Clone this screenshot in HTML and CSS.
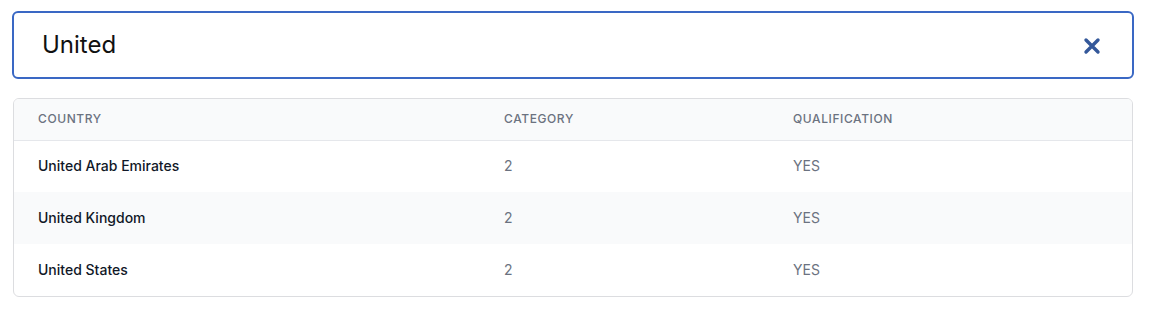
FILE: index.html
```html
<!DOCTYPE html>
<html>
<head>
<meta charset="utf-8">
<link rel="stylesheet" href="styles.css">
</head>
<body>
<div class="page">
  <div class="search">
    <span class="search-text">United</span>
    <svg class="clear" width="18" height="18" viewBox="0 0 18 18"><path d="M3 3L15 15M15 3L3 15" stroke="#34589a" stroke-width="3.4" stroke-linecap="round"/></svg>
  </div>
  <div class="table-wrap">
    <table class="table">
      <thead>
        <tr><th class="c1">Country</th><th class="c2">Category</th><th>Qualification</th></tr>
      </thead>
      <tbody>
        <tr><td class="name">United Arab Emirates</td><td>2</td><td>YES</td></tr>
        <tr class="alt"><td class="name">United Kingdom</td><td>2</td><td>YES</td></tr>
        <tr><td class="name">United States</td><td>2</td><td>YES</td></tr>
      </tbody>
    </table>
  </div>
</div>
</body>
</html>
```
FILE: styles.css
```css
* { box-sizing: border-box; }
html, body { margin: 0; padding: 0; background: #fff; }
body { font-family: Inter, "Noto Sans", sans-serif; }
.page { padding: 11px 28px 0 12px; display: flex; flex-direction: column; gap: 19px; }
.search {
  height: 68px;
  border: 2px solid #3a68c4;
  border-radius: 6px;
  display: flex;
  align-items: center;
  justify-content: space-between;
  padding: 0 31px 2px 28px;
}
.search-text { font-size: 24px; color: #111; }
.clear { display: block; margin-top: 3px; }
.table-wrap {
  margin: 0 1px;
  border: 1px solid #dcdde0;
  border-radius: 6px;
  overflow: hidden;
}
.table { width: 100%; border-collapse: collapse; table-layout: fixed; }
th {
  background: #f9fafb;
  height: 41px;
  text-align: left;
  font-size: 12px;
  font-weight: 500;
  letter-spacing: 0.05em;
  text-transform: uppercase;
  color: #6b7280;
  padding: 0 0 2px 24px;
  border-bottom: 1px solid #e5e7eb;
}
th.c1 { width: 466px; }
th.c2 { width: 289px; }
td {
  height: 52px;
  padding: 0 0 2px 24px;
  font-size: 14px;
  color: #6b7280;
}
td.name { color: #111827; font-weight: 500; }
tr.alt td { background: #f9fafb; }
```
